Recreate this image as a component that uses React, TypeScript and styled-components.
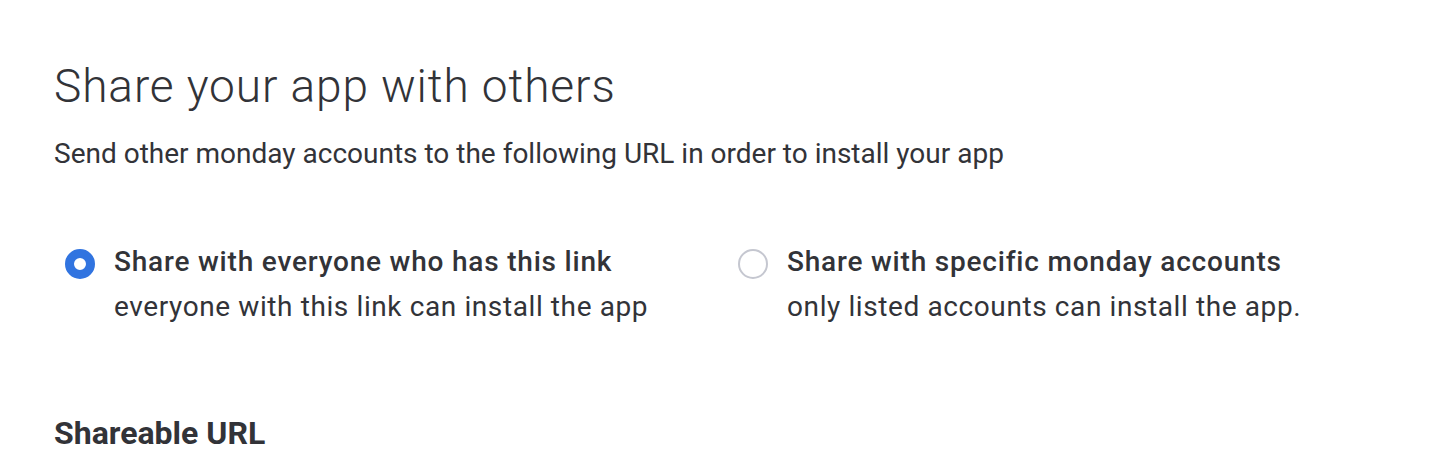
import React from "react";
import styled, { createGlobalStyle } from "styled-components";

const Global = createGlobalStyle`
  html, body { margin: 0; padding: 0; background: #ffffff; }
  body { font-family: Roboto, "Noto Sans", sans-serif; color: #323338; }
`;

const Page = styled.div`
  padding: 58px 54px 0 54px;
  display: flex;
  flex-direction: column;
`;

const Title = styled.h1`
  margin: 0;
  font-size: 46px;
  font-weight: 300;
  line-height: 56px;
  letter-spacing: 0.9px;
  color: #323338;
`;

const Subtitle = styled.p`
  margin: 22px 0 0 0;
  font-size: 28px;
  font-weight: 400;
  line-height: 36px;
  color: #323338;
`;

const Options = styled.div`
  display: flex;
  margin-top: 70px;
  padding-left: 11px;
`;

const Option = styled.label<{ $width: number }>`
  display: flex;
  align-items: flex-start;
  gap: 19px;
  width: ${(p) => p.$width}px;
  cursor: pointer;
`;

const Radio = styled.span<{ $checked: boolean }>`
  flex: none;
  box-sizing: border-box;
  width: 30px;
  height: 30px;
  margin-top: 7px;
  border-radius: 50%;
  border: ${(p) => (p.$checked ? "9.5px solid #3174e0" : "2px solid #c5c7d0")};
  background: #ffffff;
`;

const OptionText = styled.div`
  display: flex;
  flex-direction: column;
`;

const OptionLabel = styled.span`
  font-size: 28px;
  font-weight: 500;
  line-height: 40px;
  letter-spacing: 0.8px;
  color: #323338;
`;

const OptionDesc = styled.span`
  font-size: 28px;
  font-weight: 400;
  line-height: 50px;
  letter-spacing: 0.6px;
  color: #323338;
`;

const SectionHeader = styled.h2`
  margin: 81px 0 0 0;
  font-size: 32px;
  font-weight: 700;
  line-height: 40px;
  color: #323338;
`;

export default function App() {
  return (
    <>
      <Global />
      <Page>
        <Title>Share your app with others</Title>
        <Subtitle>Send other monday accounts to the following URL in order to install your app</Subtitle>
        <Options>
          <Option $width={673}>
            <Radio $checked={true} />
            <OptionText>
              <OptionLabel>Share with everyone who has this link</OptionLabel>
              <OptionDesc>everyone with this link can install the app</OptionDesc>
            </OptionText>
          </Option>
          <Option $width={600}>
            <Radio $checked={false} />
            <OptionText>
              <OptionLabel>Share with specific monday accounts</OptionLabel>
              <OptionDesc>only listed accounts can install the app.</OptionDesc>
            </OptionText>
          </Option>
        </Options>
        <SectionHeader>Shareable URL</SectionHeader>
      </Page>
    </>
  );
}
